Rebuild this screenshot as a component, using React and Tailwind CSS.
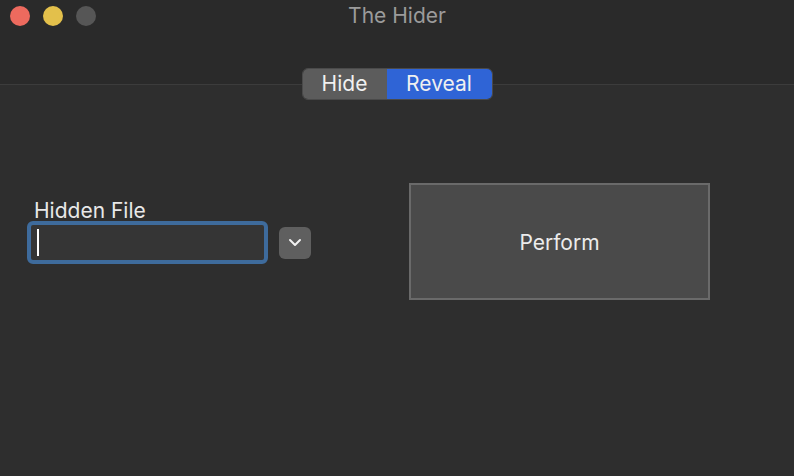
import React, { useState } from 'react';

export default function App() {
  const [mode, setMode] = useState('reveal');
  const [file, setFile] = useState('');

  return (
    <div
      className="w-[794px] h-[476px] bg-[#2e2e2e] flex flex-col overflow-hidden"
      style={{ fontFamily: 'Inter, "Open Sans", sans-serif' }}
    >
      {/* title bar + toolbar */}
      <div className="h-[85px] bg-[#2a2a2a] border-b border-[#3c3c3c] flex flex-col">
        <div className="relative h-[31px] flex items-center px-[10px]">
          <div className="flex gap-[13px]">
            <span className="w-[20px] h-[20px] rounded-full bg-[#ed6a5e]" />
            <span className="w-[20px] h-[20px] rounded-full bg-[#e3c04b]" />
            <span className="w-[20px] h-[20px] rounded-full bg-[#565656]" />
          </div>
          <div className="absolute inset-0 flex items-center justify-center text-[21px] text-[#9b9b9b]">
            The Hider
          </div>
        </div>
      </div>

      {/* segmented control sits on the toolbar line */}
      <div className="flex justify-center -mt-[17px]">
        <div className="flex h-[32px] rounded-[6px] overflow-hidden border border-[#4a4a4a] text-[21px] text-[#f0f0f0]">
          <button
            onClick={() => setMode('hide')}
            className={`w-[84px] flex items-center justify-center ${mode === 'hide' ? 'bg-[#2f64d6]' : 'bg-[#5c5c5c]'}`}
          >
            Hide
          </button>
          <button
            onClick={() => setMode('reveal')}
            className={`w-[105px] flex items-center justify-center ${mode === 'reveal' ? 'bg-[#2f64d6]' : 'bg-[#5c5c5c]'}`}
          >
            Reveal
          </button>
        </div>
      </div>

      <div className="flex pt-[83px]">
        <div className="flex flex-col pl-[27px] pt-[16px] w-[409px]">
          <label className="pl-[7px] text-[21px] leading-[24px] text-[#e8e8e8]">Hidden File</label>
          <div className="flex items-center gap-[11px] -mt-[2px]">
            <div className="relative w-[241px] h-[43px] rounded-[6px] border-[4px] border-[#3e6b9c] bg-[#353535] flex items-center pl-[6px]">
              <input
                value={file}
                onChange={(e) => setFile(e.target.value)}
                className="w-full h-full bg-transparent outline-none text-[16px] text-white"
              />
              <span className="absolute left-[6px] top-[4px] w-[2px] h-[27px] bg-white" />
            </div>
            <button className="w-[32px] h-[32px] rounded-[6px] bg-[#5f5f5f] flex items-center justify-center">
              <svg width="14" height="9" viewBox="0 0 14 9" fill="none">
                <path d="M2 2l5 5 5-5" stroke="#f2f2f2" strokeWidth="2" strokeLinecap="round" strokeLinejoin="round" />
              </svg>
            </button>
          </div>
        </div>
        <button className="w-[301px] h-[117px] pt-[3px] bg-[#4a4a4a] border-2 border-[#6a6a6a] text-[21px] text-[#ececec]">
          Perform
        </button>
      </div>
    </div>
  );
}
